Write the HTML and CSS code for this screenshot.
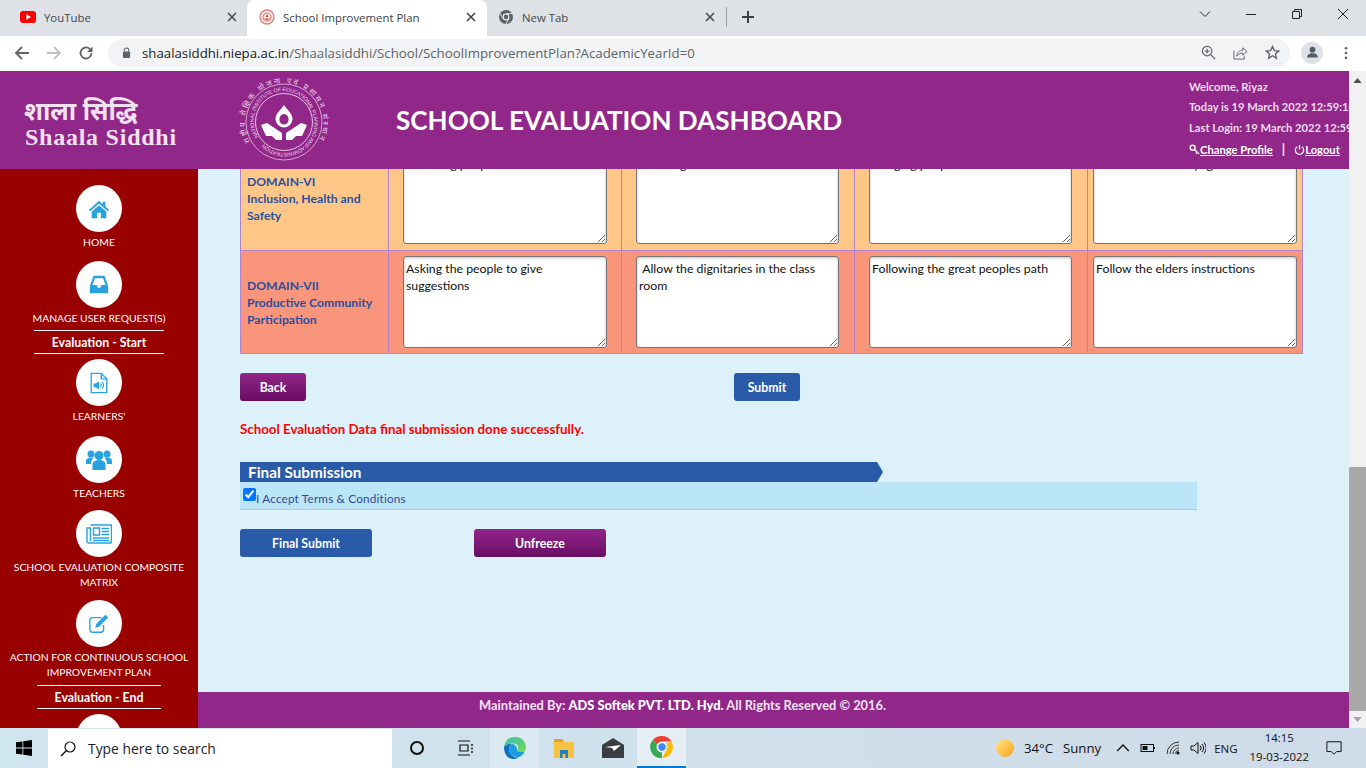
FILE: index.html
```html
<!DOCTYPE html>
<html lang="en">
<head>
<meta charset="utf-8">
<title>School Improvement Plan</title>
<link rel="stylesheet" href="styles.css">
</head>
<body>
<div class="tabstrip">
  <div class="tab tab-first">
    <svg class="favicon" viewBox="0 0 16 16"><rect x="0" y="2" width="16" height="12" rx="3" fill="#f00"/><path d="M6.400 5.200 11 8l-4.600 2.800z" fill="#fff"/></svg>
    <span class="tabtitle">YouTube</span>
    <svg class="tabclose" viewBox="0 0 10 10"><path d="M1 1l8 8M9 1l-8 8" stroke="#45484d" stroke-width="1.500" fill="none"/></svg>
  </div>
  <div class="tab tab-active">
    <svg class="favicon" viewBox="0 0 16 16"><circle cx="8" cy="8" r="7" fill="#fbe9e7" stroke="#d9867c" stroke-width="1.400"/><circle cx="8" cy="8" r="4" fill="none" stroke="#d9867c" stroke-width="1.200"/><path d="M8 5l1.500 3H6.500zM5 9.500h6L8 11.500z" fill="#c9574c"/></svg>
    <span class="tabtitle">School Improvement Plan</span>
    <svg class="tabclose" viewBox="0 0 10 10"><path d="M1 1l8 8M9 1l-8 8" stroke="#3c4043" stroke-width="1.500" fill="none"/></svg>
  </div>
  <div class="tab tab-third">
    <svg class="favicon" viewBox="0 0 16 16"><circle cx="8" cy="8" r="7" fill="#5f6368"/><circle cx="8" cy="8" r="3.400" fill="#fff"/><circle cx="8" cy="8" r="2.400" fill="#5f6368"/><path d="M8 4.600h6M5 9.700 2.200 4.500M11 9.700l-3.200 5.400" stroke="#dee1e6" stroke-width="1"/></svg>
    <span class="tabtitle">New Tab</span>
    <svg class="tabclose" viewBox="0 0 10 10"><path d="M1 1l8 8M9 1l-8 8" stroke="#45484d" stroke-width="1.500" fill="none"/></svg>
  </div>
  <span class="tabsep"></span>
  <svg class="newtab" viewBox="0 0 14 14"><path d="M7 1v12M1 7h12" stroke="#3c4043" stroke-width="2" fill="none"/></svg>
  <div class="winbtns">
    <svg class="winicon" viewBox="0 0 12 12"><path d="M1 3.500l5 5 5-5" stroke="#222" fill="none"/></svg>
    <svg class="winicon" viewBox="0 0 12 12"><path d="M1 6.500h10" stroke="#222" fill="none"/></svg>
    <svg class="winicon" viewBox="0 0 12 12"><path d="M3.500 3V1.500h7v7H9M1.500 3.500h7v7h-7z" stroke="#222" fill="none"/></svg>
    <svg class="winicon" viewBox="0 0 12 12"><path d="M1 1l10 10M11 1L1 11" stroke="#222" fill="none"/></svg>
  </div>
</div>
<div class="toolbar">
  <svg class="navicon" viewBox="0 0 16 16"><path d="M15 8H2M8 2 2 8l6 6" stroke="#5f6368" stroke-width="1.800" fill="none"/></svg>
  <svg class="navicon" viewBox="0 0 16 16"><path d="M1 8h13M8 2l6 6-6 6" stroke="#bdc1c6" stroke-width="1.800" fill="none"/></svg>
  <svg class="navicon" viewBox="0 0 16 16"><path d="M13.500 8A5.500 5.500 0 1 1 12 4.200" stroke="#5f6368" stroke-width="1.800" fill="none"/><path d="M14.500 1.500v5.500H9z" fill="#5f6368"/></svg>
  <div class="omnibox">
    <svg class="lock" viewBox="0 0 10 12"><path d="M2.500 5V3.500a2.500 2.500 0 0 1 5 0V5" stroke="#5f6368" stroke-width="1.200" fill="none"/><rect x="1" y="5" width="8" height="7" rx="1" fill="#5f6368"/></svg>
    <span class="url"><span class="urlhost">shaalasiddhi.niepa.ac.in</span>/Shaalasiddhi/School/SchoolImprovementPlan?AcademicYearId=0</span>
    <svg class="omniicon" viewBox="0 0 16 16"><circle cx="6.500" cy="6.500" r="5" stroke="#5f6368" stroke-width="1.300" fill="none"/><path d="M10.300 10.300 15 15M4 6.500h5M6.500 4v5" stroke="#5f6368" stroke-width="1.300" fill="none"/></svg>
    <svg class="omniicon" viewBox="0 0 16 16"><path d="M1 6v9h11v-3" stroke="#5f6368" fill="none"/><path d="M4 12c0-4 3-6.500 6.500-6.500V3L15 7l-4.500 4V8.500C8 8.500 5.500 9.500 4 12z" stroke="#5f6368" fill="none"/></svg>
    <svg class="omniicon" viewBox="0 0 16 16"><path d="M8 1.500l2 4.400 4.800.5-3.600 3.200 1 4.700L8 11.500l-4.200 2.800 1-4.700L1.200 6.400 6 5.900z" stroke="#5f6368" stroke-width="1.400" fill="none"/></svg>
  </div>
  <span class="avatar"><svg viewBox="0 0 16 16" class="avatarimg"><circle cx="8" cy="4.500" r="3.500" fill="#4f5b6b"/><path d="M1.500 14c0-3.500 3-5 6.500-5s6.500 1.500 6.500 5z" fill="#4f5b6b"/></svg></span>
  <svg class="kebab" viewBox="0 0 4 16"><circle cx="2" cy="2.500" r="1.500" fill="#5f6368"/><circle cx="2" cy="8" r="1.500" fill="#5f6368"/><circle cx="2" cy="13.500" r="1.500" fill="#5f6368"/></svg>
</div>

<div class="viewport">
  <div class="page">
    <header class="siteheader">
      <div class="brand">
        <div class="brandhi">शाला सिद्धि</div>
        <div class="branden">Shaala Siddhi</div>
      </div>
      <svg class="seal" viewBox="0 0 92 92">
        <defs>
          <path id="ringouter" d="M12.200 65.500A39 39 0 1 1 79.800 65.500"/>
          <path id="ringinner" d="M20.500 60.750A29.500 29.500 0 1 1 71.500 31.250A29.500 29.500 0 1 1 20.500 60.750"/>
        </defs>
        <circle cx="46" cy="46" r="38" fill="none" stroke="#ecd6ea" stroke-width="0.700"/>
        <circle cx="46" cy="46" r="28.500" fill="none" stroke="#ecd6ea" stroke-width="0.900"/>
        <text class="sealhi"><textPath href="#ringouter" textLength="160">राष्ट्रीय शैक्षिक योजना एवं प्रशासन संस्थान</textPath></text>
        <text class="sealen"><textPath href="#ringinner" textLength="182">NATIONAL INSTITUTE OF EDUCATIONAL PLANNING AND ADMINISTRATION</textPath></text>
        <path d="M46 29c3 5 8.500 8 8.500 14a8.500 8.500 0 0 1-17 0c0-6 5.500-9 8.500-14zm0 9a5 5 0 0 0-4.500 6 4.500 4.500 0 0 0 9 0A5 5 0 0 0 46 38z" fill="#fff" fill-rule="evenodd"/>
        <path d="M23 49l6-2 15 10v7h-6l-4-4-6 0zM69 49l-6-2-15 10v7h6l4-4 6 0z" fill="#fff"/>
      </svg>
      <h1 class="sitetitle">SCHOOL EVALUATION DASHBOARD</h1>
      <div class="userinfo">
        <div class="userline">Welcome, Riyaz</div>
        <div class="userline">Today is 19 March 2022 12:59:10 PM</div>
        <div class="userline">Last Login: 19 March 2022 12:59:10 PM</div>
        <div class="userlinks">
          <svg class="linkicon" viewBox="0 0 12 12"><circle cx="4" cy="4" r="2.700" fill="none" stroke="#fff" stroke-width="1.500"/><path d="M6 6l5 5M9 9l-1.500 1.500" stroke="#fff" stroke-width="1.500" fill="none"/></svg><a class="userlink">Change Profile</a>
          <span class="linksep">|</span>
          <svg class="linkicon" viewBox="0 0 12 12"><path d="M3.500 3a4.500 4.500 0 1 0 5 0M6 1v5" stroke="#fff" stroke-width="1.400" fill="none"/></svg><a class="userlink">Logout</a>
        </div>
      </div>
    </header>
    <div class="midrow">
      <nav class="sidebar">
        <div class="navitem navitem-home">
          <span class="navcircle"><svg class="navglyph" viewBox="0 0 24 24"><path d="M12 3 1 13l1.500 1.500L12 6l9.500 8.500L23 13l-4-3.600V4h-3v2.700z" fill="#29a3e0"/><path d="M4 15v7h6v-6h4v6h6v-7l-8-7z" fill="#29a3e0"/></svg></span>
          <span class="navlabel">HOME</span>
        </div>
        <div class="navitem navitem-tight">
          <span class="navcircle"><svg class="navglyph" viewBox="0 0 24 24"><path d="M6 2h12l4 11v8H2v-8zM7.500 4.500 5 12h4.500l1 3h3l1-3H19l-2.500-7.500z" fill="#29a3e0" fill-rule="evenodd"/></svg></span>
          <span class="navlabel">MANAGE USER REQUEST(S)</span>
        </div>
        <div class="navsection">Evaluation - Start</div>
        <div class="navitem navitem-learners">
          <span class="navcircle"><svg class="navglyph" viewBox="0 0 24 24"><path d="M3.500 1.500h11l6 6v15h-17zM14.500 1.500v6h6" stroke="#29a3e0" stroke-width="1.500" fill="none"/><path d="M6 12.500h2.500L12 10v9l-3.500-2.500H6z" fill="#29a3e0"/><path d="M13.500 12.500a3 3 0 0 1 0 4M15.500 11a5.500 5.500 0 0 1 0 7" stroke="#29a3e0" stroke-width="1.200" fill="none"/></svg></span>
          <span class="navlabel">LEARNERS'</span>
        </div>
        <div class="navitem navitem-teachers">
          <span class="navcircle"><svg class="navglyph navglyph-wide" viewBox="0 0 26 24"><circle cx="13" cy="7.500" r="4.500" fill="#29a3e0"/><circle cx="5" cy="6" r="3.500" fill="#29a3e0"/><circle cx="21" cy="6" r="3.500" fill="#29a3e0"/><path d="M6.500 22v-5.500c0-3 3-4.500 6.500-4.500s6.500 1.500 6.500 4.500V22z" fill="#29a3e0"/><path d="M0 16v-3c0-2 2-3.500 5-3.500 1 0 1.500 0 2.500.5-1.500 1-2.500 3-2.500 6zM26 16v-3c0-2-2-3.500-5-3.500-1 0-1.500 0-2.500.5 1.500 1 2.500 3 2.500 6z" fill="#29a3e0"/></svg></span>
          <span class="navlabel">TEACHERS</span>
        </div>
        <div class="navitem">
          <span class="navcircle"><svg class="navglyph navglyph-wide" viewBox="0 0 26 20"><path d="M4.500 1h21v16.500a1.500 1.500 0 0 1-1.500 1.500H2.500A1.500 1.500 0 0 1 1 17.500V4h3.500v13" stroke="#29a3e0" stroke-width="1.400" fill="none"/><path d="M7.500 4h6v7h-6z" stroke="#29a3e0" stroke-width="1.400" fill="none"/><path d="M15.500 4.500H23M15.500 7.500H23M15.500 10.500H23M7 14h16M7 16.500h16" stroke="#29a3e0" stroke-width="1.400"/></svg></span>
          <span class="navlabel">SCHOOL EVALUATION COMPOSITE MATRIX</span>
        </div>
        <div class="navitem navitem-tight">
          <span class="navcircle"><svg class="navglyph" viewBox="0 0 24 24"><path d="M17 13v5a3 3 0 0 1-3 3H5a3 3 0 0 1-3-3V8a3 3 0 0 1 3-3h10" stroke="#29a3e0" stroke-width="1.500" fill="none"/><path d="M8 16l1-4L19 2l3 3-10 10z" fill="#29a3e0"/></svg></span>
          <span class="navlabel">ACTION FOR CONTINUOUS SCHOOL IMPROVEMENT PLAN</span>
        </div>
        <div class="navsection navsection-end">Evaluation - End</div>
        <div class="navitem">
          <span class="navcircle"><svg class="navglyph" viewBox="0 0 24 24"><rect x="3" y="3" width="18" height="18" rx="3" fill="#29a3e0"/></svg></span>
        </div>
      </nav>
      <div class="maincol">
        <main class="content">
          <table class="domains">
            <colgroup><col class="col-name"><col class="col-std"><col class="col-std"><col class="col-std"><col class="col-last"></colgroup>
            <tr class="row-six">
              <td class="domainname domainname-six">DOMAIN-VI<br>Inclusion, Health and<br>Safety</td>
              <td class="cell"><textarea class="answer answer-tall" readonly>Providing people care</textarea></td>
              <td class="cell cell-narrow"><textarea class="answer answer-tall" readonly>Teaching the</textarea></td>
              <td class="cell cell-narrow"><textarea class="answer answer-tall" readonly>Bringing people</textarea></td>
              <td class="cell cell-last"><textarea class="answer answer-tall" readonly>Follow the school yoga</textarea></td>
            </tr>
            <tr class="row-seven">
              <td class="domainname">DOMAIN-VII<br>Productive Community<br>Participation</td>
              <td class="cell"><textarea class="answer" readonly>Asking the people to give suggestions</textarea></td>
              <td class="cell cell-narrow"><textarea class="answer" readonly> Allow the dignitaries in the class room</textarea></td>
              <td class="cell cell-narrow"><textarea class="answer" readonly>Following the great peoples path</textarea></td>
              <td class="cell cell-last"><textarea class="answer" readonly>Follow the elders instructions</textarea></td>
            </tr>
          </table>
          <div class="actions actions-top">
            <button class="btn btn-purple btn-small">Back</button>
            <button class="btn btn-blue btn-small">Submit</button>
          </div>
          <p class="successmsg">School Evaluation Data final submission done successfully.</p>
          <h2 class="sectionbar">Final Submission</h2>
          <label class="termsrow"><input class="termscheck" type="checkbox" checked><span>I Accept Terms &amp; Conditions</span></label>
          <div class="actions actions-bottom">
            <button class="btn btn-blue btn-large">Final Submit</button>
            <button class="btn btn-purple btn-large">Unfreeze</button>
          </div>
        </main>
        <footer class="sitefooter">Maintained By: <b class="footerstrong">ADS Softek PVT. LTD. Hyd.</b> All Rights Reserved © 2016.</footer>
      </div>
    </div>
  </div>
  <div class="scrollbar">
    <svg class="scrollarrow" viewBox="0 0 10 6"><path d="M5 0l5 6H0z" fill="#505050"/></svg>
    <span class="scrollspace"></span>
    <span class="scrollthumb"></span>
    <svg class="scrollarrow" viewBox="0 0 10 6"><path d="M0 0h10L5 6z" fill="#a3a3a3"/></svg>
  </div>
</div>

<div class="taskbar">
  <svg class="startlogo" viewBox="0 0 16 16"><path d="M0 2.300 6.500 1.400v6.200H0zM7.300 1.300 16 0v7.600H7.300zM0 8.400h6.500v6.200L0 13.700zM7.300 8.400H16V16l-8.700-1.200z" fill="#000"/></svg>
  <div class="searchbox">
    <svg class="searchicon" viewBox="0 0 16 16"><circle cx="10" cy="6" r="5" stroke="#111" stroke-width="1.200" fill="none"/><path d="M6.500 9.500 1 15" stroke="#111" stroke-width="1.400"/></svg>
    <span class="searchtext">Type here to search</span>
  </div>
  <span class="taskslot"><svg class="taskicon" viewBox="0 0 16 16"><circle cx="8" cy="8" r="6" stroke="#111" stroke-width="2" fill="none"/></svg></span>
  <span class="taskslot"><svg class="taskicon" viewBox="0 0 16 16"><path d="M0 1h12M0 15h12M2 5h8v6H2z" stroke="#111" stroke-width="1.200" fill="none"/><path d="M14 4v2M14 7.500v2M14 11v2" stroke="#111" stroke-width="1.400"/></svg></span>
  <span class="taskslot taskslot-lit"><svg class="taskicon taskicon-big" viewBox="0 0 24 24"><defs><linearGradient id="edgeg" x1="0" y1="0" x2="1" y2="1"><stop offset="0" stop-color="#35c1b0"/><stop offset="1" stop-color="#7bd652"/></linearGradient></defs><path d="M1 11C2 4 7 1 12 1c7 0 11 5 11 10.500 0 3-2.500 4.500-5 4.500-3 0-4-1-4-2 2-1 2-6-3-6.500C6 7.500 2 9 1 11z" fill="url(#edgeg)"/><path d="M1 11c1-2 5-3.500 8-3 -3 1.500-4 5-2 9 1.500 3 5 5 9 4.500-2 1-4 1.500-6 1.500C5 23 1 18 1 11z" fill="#0f6fc5"/><path d="M7 17c-2-4-1-7.500 2-9 3 .5 5 2 5 6 0 1 1 2 4 2 1 0 3-.5 4-1.500-1 3-3 5.500-6 6.500-4 .5-7.500-1.500-9-4z" fill="#1b9de2"/></svg></span>
  <span class="taskslot"><svg class="taskicon taskicon-big" viewBox="0 0 24 24"><path d="M2 3h8l2 3h10v16H2z" fill="#f5c242"/><path d="M2 3h8l2 3H2z" fill="#e0a526"/><path d="M8 14h8v8h-2.500v-4h-3v4H8z" fill="#1d80c8"/></svg></span>
  <span class="taskslot"><svg class="taskicon taskicon-big" viewBox="0 0 24 24"><path d="M1 9 12 2l11 7v13H1z" fill="#3a3d41"/><path d="M4 11l16-2-7 6-2-3z" fill="#fff"/></svg></span>
  <span class="taskslot taskslot-active"><svg class="taskicon taskicon-big" viewBox="0 0 24 24"><path d="M12 1a11 11 0 0 1 9.500 5.500H12a5.500 5.500 0 0 0-5 3.200L3.200 4.500A11 11 0 0 1 12 1z" fill="#ea4335"/><path d="M21.500 6.500A11 11 0 0 1 12 23l4.700-8.200A5.500 5.500 0 0 0 16 8.500z" fill="#fbbc05"/><path d="M3.200 4.500 7 9.700a5.500 5.500 0 0 0 5 7.800l-.1 5.500A11 11 0 0 1 3.200 4.500z" fill="#34a853"/><circle cx="12" cy="12" r="4.300" fill="#4285f4" stroke="#fff" stroke-width="1"/></svg></span>
  <div class="tray">
    <span class="sun"></span>
    <span class="traytemp">34°C</span>
    <span class="traytemp traysunny">Sunny</span>
    <svg class="trayicon trayicon-chev" viewBox="0 0 12 12"><path d="M1 8.500l5-5 5 5" stroke="#111" stroke-width="1.200" fill="none"/></svg>
    <svg class="trayicon" viewBox="0 0 16 12"><rect x="1" y="2.500" width="12.500" height="7" stroke="#111" fill="none"/><rect x="2.500" y="4" width="5" height="4" fill="#111"/><path d="M14.500 5v2" stroke="#111"/></svg>
    <svg class="trayicon" viewBox="0 0 14 14"><path d="M1 13A12 12 0 0 1 13 1M4 13A9 9 0 0 1 13 4M7 13a6 6 0 0 1 6-6M9.500 13a3.500 3.500 0 0 1 3.500-3.500" stroke="#333" fill="none"/><circle cx="12" cy="12" r="1.500" fill="#111"/></svg>
    <svg class="trayicon" viewBox="0 0 16 14"><path d="M1 5h3l4-3.500v11L4 9H1z" stroke="#111" fill="none"/><path d="M10 4.500a3.500 3.500 0 0 1 0 5M12 3a6 6 0 0 1 0 8M14 1.500a8 8 0 0 1 0 11" stroke="#111" fill="none"/></svg>
    <span class="trayeng">ENG</span>
    <div class="clock"><span>14:15</span><span>19-03-2022</span></div>
    <svg class="notify" viewBox="0 0 18 16"><path d="M1 1h16v11h-5l-3 3-3-3H1z" stroke="#111" stroke-width="1.100" fill="none"/></svg>
  </div>
</div>
</body>
</html>
```

FILE: styles.css
```css
* { box-sizing: border-box; }
html, body { margin: 0; padding: 0; height: 100%; }
body { width: 1366px; height: 768px; overflow: hidden; display: flex; flex-direction: column; font-family: "Lato", "Liberation Sans", sans-serif; background: #fff; }

/* browser chrome */
.tabstrip { height: 36px; flex: none; background: #dee1e6; display: flex; align-items: center; }
.tab { height: 36px; display: flex; align-items: center; font: 12px "Open Sans", sans-serif; color: #45484d; }
.tab-first { width: 247px; padding: 0 10px 2px 20px; }
.tab-active { width: 240px; padding: 0 11px 2px 12px; background: #fff; color: #3c4043; border-radius: 8px 8px 0 0; }
.tab-third { width: 240px; padding: 0 12px 2px 11px; }
.favicon { width: 16px; height: 16px; flex: none; }
.tabtitle { flex: 1; margin-left: 8px; font-size: 11.400px; }
.tabclose { width: 10px; height: 10px; flex: none; }
.tabsep { width: 1px; height: 20px; background: #9aa0a6; margin-left: -1px; margin-top: -2px; }
.newtab { width: 14px; height: 14px; margin-left: 14px; margin-top: -2px; }
.winbtns { margin-left: auto; display: flex; gap: 34px; padding-right: 17px; margin-top: -8px; }
.winicon { width: 12px; height: 12px; }
.toolbar { height: 35px; flex: none; background: #fff; display: flex; align-items: center; padding: 0 0 2px 14px; }
.navicon { width: 16px; height: 16px; flex: none; margin-right: 16px; }
.omnibox { width: 1182px; height: 28px; margin-left: -2px; background: #f1f3f4; border-radius: 14px; display: flex; align-items: center; padding: 0 10px 0 14px; }
.lock { width: 9px; height: 11px; flex: none; margin-right: 11px; }
.url { flex: 1; font: 13.250px "Open Sans", sans-serif; color: #5f6368; white-space: nowrap; }
.urlhost { color: #202124; }
.omniicon { width: 15px; height: 15px; flex: none; margin-left: 17px; }
.avatar { width: 22px; height: 22px; border-radius: 50%; background: #dee1e6; margin-left: 11px; display: flex; align-items: center; justify-content: center; flex: none; }
.avatarimg { width: 13px; height: 13px; }
.kebab { width: 4px; height: 14px; margin-left: 21px; }

/* page */
.viewport { height: 657px; flex: none; display: flex; }
.page { width: 1349px; height: 657px; display: flex; flex-direction: column; overflow: hidden; }
.scrollbar { width: 17px; background: #f1f1f1; display: flex; flex-direction: column; align-items: center; padding: 7px 0 6px; }
.scrollarrow { width: 9px; height: 5px; flex: none; }
.scrollspace { flex: 1; }
.scrollthumb { width: 17px; height: 244px; background: #a8a8a8; margin-bottom: 6px; }

.siteheader { height: 98px; flex: none; background: #92278a; display: flex; align-items: center; color: #fff; overflow: hidden; }
.brand { width: 238px; flex: none; padding: 6px 0 0 24px; }
.brandhi { font: 700 25px/28px "Noto Sans", "Liberation Serif", serif; color: #f2e2f1; }
.branden { font: 700 24px/26px "Liberation Serif", serif; color: #f2e2f1; letter-spacing: 0.750px; padding-left: 1px; }
.seal { width: 92px; height: 92px; flex: none; margin-top: 4px; }
.sealhi { font: 7.500px "Noto Sans", sans-serif; fill: #ecd6ea; }
.sealen { font: 5.200px "Liberation Sans", sans-serif; fill: #ecd6ea; }
.sitetitle { margin: 0 0 0 66px; width: 793px; flex: none; font: 700 26.100px "Lato", sans-serif; white-space: nowrap; }
.userinfo { flex: none; width: 160px; white-space: nowrap; font: 700 11.200px "Lato", sans-serif; color: #f0dcef; margin-bottom: 2px; }
.userline { height: 20.500px; line-height: 20px; }
.userlinks { display: flex; align-items: center; height: 24px; margin-top: -1px; color: #fff; font-size: 11.200px; }
.userlink { text-decoration: underline; }
.linkicon { width: 11px; height: 11px; flex: none; }
.linksep { margin: 0 9px; font-size: 13px; }

.midrow { flex: 1; min-height: 0; display: flex; }
.sidebar { width: 198px; flex: none; background: #990000; overflow: hidden; display: flex; flex-direction: column; align-items: center; padding-top: 16px; color: #fff; }
.navitem { display: flex; flex-direction: column; align-items: center; text-align: center; margin-bottom: 10px; flex: none; width: 190px; }
.navitem-home { margin-bottom: 11px; }
.navitem-learners { margin-bottom: 12px; }
.navitem-teachers { margin-bottom: 9px; }
.navitem-tight { margin-bottom: 0; }
.navcircle { width: 46px; height: 47px; border-radius: 50%; background: #fff; display: flex; align-items: center; justify-content: center; flex: none; }
.navglyph { width: 22px; height: 22px; }
.navglyph-wide { width: 26px; height: 24px; }
.navlabel { font-size: 10.350px; line-height: 15px; margin-top: 3px; }
.navsection { width: 130px; height: 24px; margin: 4px 0 5px; flex: none; border-top: 1px solid #fff; border-bottom: 1px solid #fff; font-size: 12.300px; font-weight: 700; line-height: 24px; text-align: center; }
.navsection-end { width: 124px; margin-top: 5px; }

.maincol { flex: 1; min-width: 0; display: flex; flex-direction: column; }
.content { flex: 1; min-height: 0; overflow: hidden; background: #ddf1fb; padding-left: 42px; }
.domains { border-collapse: collapse; table-layout: fixed; width: 1062px; margin-top: -25px; }
.col-name { width: 148px; }
.col-std { width: 233px; }
.col-last { width: 215px; }
.domains td { border: 1px solid #b183d2; height: 103px; }
.row-six { background: #fec787; }
.row-seven { background: #f9957b; }
.domains .row-six td { height: 106px; }
.domainname { padding: 0 0 0 6px; font-size: 12.200px; font-weight: 700; line-height: 17px; color: #2a4f9f; }
.domainname-six { padding-top: 2px; }
.cell { padding: 0 14px; }
.cell-narrow { padding: 0 15px 0 14px; }
.cell-last { padding: 0 5px; }
.answer { display: block; width: 100%; height: 92px; padding: 3px 2px 2px; border: 1px solid #767676; border-radius: 3px; font: 12.300px/17px "Lato", sans-serif; color: #111; background: #fff; box-shadow: inset 0 1px 3px rgba(0,0,0,.25); outline: 0; }
.answer-tall { height: 92px; }

.actions { display: flex; }
.actions-top { margin-top: 19px; gap: 428px; }
.actions-bottom { margin-top: 19px; gap: 102px; }
.btn { border: 0; border-radius: 3px; color: #fff; font: 700 12.300px "Lato", sans-serif; height: 28px; padding: 0; }
.btn-blue { background: #2a5ba8; }
.btn-purple { background: linear-gradient(#92278a, #690c63); }
.btn-small { width: 66px; }
.btn-large { width: 132px; }
.successmsg { margin: 21px 0 0; font-size: 13.300px; font-weight: 700; color: #f00; line-height: 15px; }
.sectionbar { margin: 25px 0 0; width: 643px; height: 20px; background: #2a5ba8; color: #fff; font-size: 15.300px; font-weight: 700; line-height: 21px; padding-left: 8px; clip-path: polygon(0 0, 637px 0, 100% 50%, 637px 100%, 0 100%); }
.termsrow { width: 957px; height: 28px; background: #bde5f8; border-bottom: 1px solid #a6cfe6; display: flex; align-items: center; font-size: 11.700px; color: #2c4a8f; }
.termscheck { width: 13px; height: 13px; margin: 0 0 0 3px; position: relative; top: -1px; accent-color: #0075ff; }
.termsrow span { margin-top: 5px; letter-spacing: 0.200px; }
.sitefooter { height: 36px; flex: none; background: #92278a; color: #f3e4f2; font-size: 12.850px; font-weight: 700; line-height: 27px; padding-left: 281px; }
.footerstrong { color: #fff; }

/* taskbar */
.taskbar { height: 40px; flex: none; display: flex; align-items: center; background: linear-gradient(90deg, #d0e6ef, #cfdbe8); color: #111; font-family: "Open Sans", sans-serif; }
.startlogo { width: 16px; height: 16px; margin-left: 16px; flex: none; }
.searchbox { width: 344px; height: 39px; margin: 1px 0 0 16px; background: #fff; display: flex; align-items: center; padding-left: 12px; flex: none; }
.searchicon { width: 16px; height: 16px; flex: none; }
.searchtext { margin-left: 12px; font-size: 13.900px; color: #222; }
.taskslot { width: 49px; height: 40px; display: flex; align-items: center; justify-content: center; flex: none; }
.taskslot-lit { background: rgba(255,255,255,.25); }
.taskslot-active { background: rgba(255,255,255,.45); border-bottom: 2px solid #0078d4; }
.taskicon { width: 16px; height: 16px; }
.taskicon-big { width: 24px; height: 24px; }
.tray { flex: 1; display: flex; align-items: center; font-size: 13px; padding-left: 310px; }
.sun { width: 18px; height: 18px; border-radius: 50%; background: linear-gradient(135deg, #ffe680, #f9a11b); margin-right: 10px; flex: none; }
.traytemp { font-size: 13.200px; }
.traysunny { margin-left: 10px; }
.trayicon { width: 16px; height: 14px; margin-left: 9px; flex: none; }
.trayicon-chev { margin-left: 14px; }
.trayeng { font-size: 11.500px; margin-left: 8px; }
.clock { display: flex; flex-direction: column; align-items: center; font-size: 11.400px; line-height: 19px; margin: -2px 0 0 12px; }
.notify { width: 16px; height: 16px; margin-left: 17px; flex: none; }
```
